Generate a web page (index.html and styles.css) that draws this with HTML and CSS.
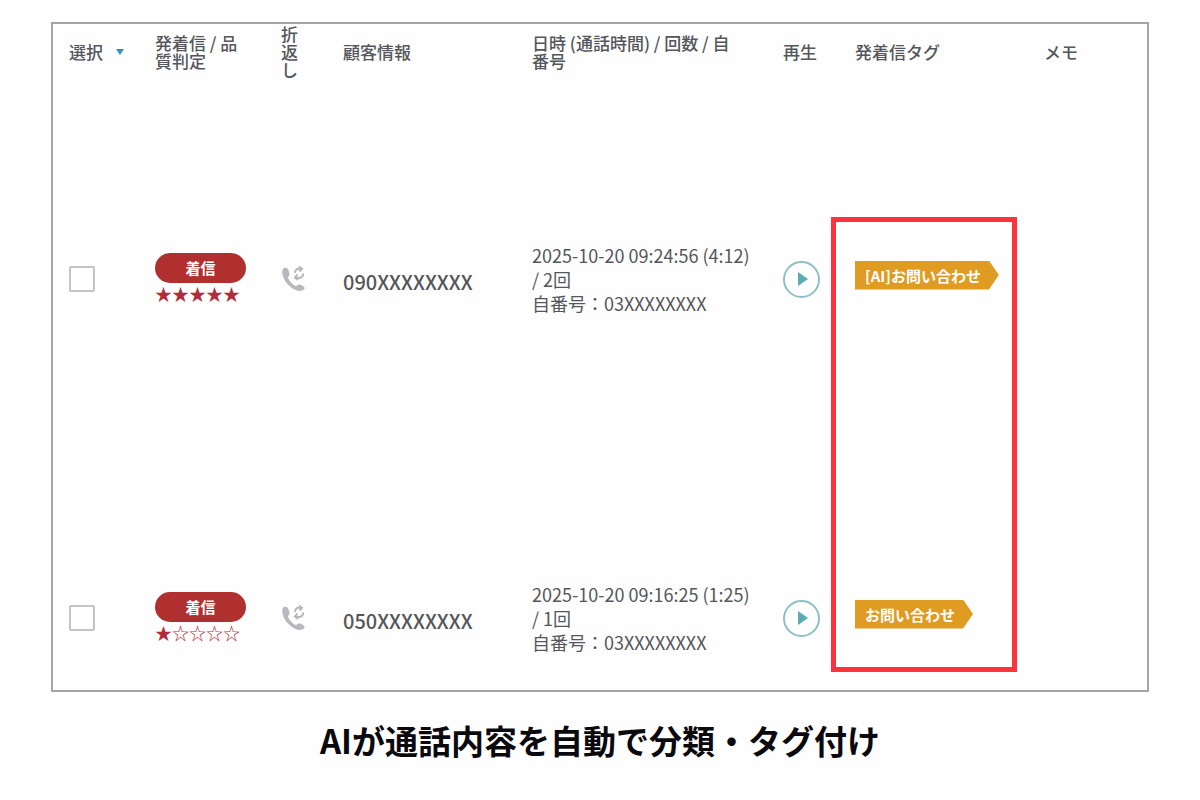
FILE: index.html
```html
<!DOCTYPE html>
<html lang="ja">
<head>
    <meta charset="UTF-8">
    <meta name="viewport" content="width=device-width, initial-scale=1.0">
    <title>通話履歴</title>
    <link rel="stylesheet" href="styles.css">
</head>
<body>
    <main class="page">
        <div class="call-frame">
            <table class="call-table">
                <thead>
                    <tr>
                        <th class="col-select"><button type="button" class="sort-button">選択<svg class="sort-arrow" viewBox="0 0 10 6" aria-hidden="true"><path d="M1 0h8L5 6z"/></svg></button></th>
                        <th class="col-type">発着信 / 品質判定</th>
                        <th class="col-callback">折返し</th>
                        <th class="col-customer">顧客情報</th>
                        <th class="col-date">日時 (通話時間) / 回数 / 自番号</th>
                        <th class="col-play">再生</th>
                        <th class="col-tag">発着信タグ</th>
                        <th class="col-memo">メモ</th>
                    </tr>
                </thead>
                <tbody>
                    <tr>
                        <td><input type="checkbox" class="row-check" aria-label="選択"></td>
                        <td>
                            <span class="call-type">着信</span>
                            <span class="stars">★★★★★</span>
                        </td>
                        <td>
                            <button type="button" class="callback-button" aria-label="折返し">
                                <svg viewBox="0 0 24 26" width="24" height="26" aria-hidden="true">
                                    <path class="handset" d="M2 3C0 6 2 13 7 18.500C11 23 17 26 21 24.500C23 24 24 22.500 23.500 21.500C23 20 20 18.500 18 18.500C16.500 18.500 16 20.500 14.500 20C12 19 8 14.500 7 12C6.500 10.500 8.500 10 8.500 8.500C8.500 6 7 2.500 5.500 2C4 1.500 2.800 2 2 3Z"/>
                                    <path class="arrows" d="M14 7C14 4 16 2.500 18 2.800H21M18 0.500L21 2.800L18.500 5.500M22 7.500C22.500 10.500 20 12.500 17 12H14.500M16.500 8.500L14 11.500L17 14"/>
                                </svg>
                            </button>
                        </td>
                        <td><span class="phone-number">090XXXXXXXX</span></td>
                        <td>2025-10-20 09:24:56 (4:12) / 2回<br>自番号：03XXXXXXXX</td>
                        <td>
                            <button type="button" class="play-button" aria-label="再生">
                                <svg viewBox="0 0 10 14" width="10" height="14" aria-hidden="true"><path d="M0 0L10 7L0 14z"/></svg>
                            </button>
                        </td>
                        <td class="tag-cell">
                            <span class="call-tag">[AI]お問い合わせ</span>
                            <div class="tag-highlight"></div>
                        </td>
                        <td></td>
                    </tr>
                    <tr>
                        <td><input type="checkbox" class="row-check" aria-label="選択"></td>
                        <td>
                            <span class="call-type">着信</span>
                            <span class="stars">★☆☆☆☆</span>
                        </td>
                        <td>
                            <button type="button" class="callback-button" aria-label="折返し">
                                <svg viewBox="0 0 24 26" width="24" height="26" aria-hidden="true">
                                    <path class="handset" d="M2 3C0 6 2 13 7 18.500C11 23 17 26 21 24.500C23 24 24 22.500 23.500 21.500C23 20 20 18.500 18 18.500C16.500 18.500 16 20.500 14.500 20C12 19 8 14.500 7 12C6.500 10.500 8.500 10 8.500 8.500C8.500 6 7 2.500 5.500 2C4 1.500 2.800 2 2 3Z"/>
                                    <path class="arrows" d="M14 7C14 4 16 2.500 18 2.800H21M18 0.500L21 2.800L18.500 5.500M22 7.500C22.500 10.500 20 12.500 17 12H14.500M16.500 8.500L14 11.500L17 14"/>
                                </svg>
                            </button>
                        </td>
                        <td><span class="phone-number">050XXXXXXXX</span></td>
                        <td>2025-10-20 09:16:25 (1:25) / 1回<br>自番号：03XXXXXXXX</td>
                        <td>
                            <button type="button" class="play-button" aria-label="再生">
                                <svg viewBox="0 0 10 14" width="10" height="14" aria-hidden="true"><path d="M0 0L10 7L0 14z"/></svg>
                            </button>
                        </td>
                        <td class="tag-cell"><span class="call-tag">お問い合わせ</span></td>
                        <td></td>
                    </tr>
                </tbody>
            </table>
        </div>
        <h1 class="page-caption">AIが通話内容を自動で分類・タグ付け</h1>
    </main>
</body>
</html>
```
FILE: styles.css
```css
* {
    box-sizing: border-box;
}

body {
    margin: 0;
    background-color: #fefefe;
    color: #55565b;
    font-family: "Noto Sans CJK JP", sans-serif;
}

button {
    font: inherit;
    color: inherit;
    background: none;
    border: none;
    padding: 0;
    cursor: pointer;
}

.page {
    padding: 22px 51px;
}

.call-frame {
    border: 2px solid #a5a3a9;
}

.call-table {
    width: 100%;
    table-layout: fixed;
    border-collapse: collapse;
}

.call-table th {
    height: 58px;
    padding: 0 14px 2px 16px;
    font-size: 17px;
    font-weight: 500;
    line-height: 18px;
    text-align: left;
    vertical-align: middle;
}

.call-table td {
    padding: 161px 14px 106px 16px;
    font-size: 18px;
    line-height: 24px;
    vertical-align: middle;
}

.call-table tbody tr:last-child td {
    padding-bottom: 36px;
}

.call-table .col-select {
    width: 86px;
    padding-right: 0;
}

.col-type {
    width: 126px;
}

.col-callback {
    width: 62px;
}

.col-customer {
    width: 189px;
}

.call-table .col-date {
    width: 251px;
    padding-right: 24px;
}

.col-play {
    width: 72px;
}

.col-tag {
    width: 189px;
}

.col-memo {
    width: 119px;
}

.sort-button {
    display: flex;
    align-items: center;
    gap: 12px;
}

.sort-arrow {
    width: 10px;
    height: 6px;
    fill: #2f8fc6;
}

.row-check {
    appearance: none;
    display: block;
    width: 26px;
    height: 26px;
    margin: 0;
    border: 2px solid #c3c2c8;
    border-radius: 2px;
    background-color: #fff;
}

.row-check:checked {
    background-color: #5aacb4;
}

.call-type {
    display: block;
    width: 91px;
    border-radius: 15px;
    background-color: #b03030;
    color: #fff;
    font-size: 15px;
    font-weight: 700;
    line-height: 30px;
    text-align: center;
}

.stars {
    display: block;
    color: #b42c3c;
    font-size: 17px;
    line-height: 22px;
}

.callback-button {
    display: block;
}

.callback-button svg {
    display: block;
}

.handset {
    fill: #b9b8be;
}

.arrows {
    fill: none;
    stroke: #b9b8be;
    stroke-width: 2;
}

.phone-number {
    display: block;
    padding-top: 6px;
    font-size: 20px;
    font-weight: 500;
}

.play-button {
    display: flex;
    align-items: center;
    justify-content: center;
    width: 37px;
    height: 37px;
    padding-left: 2px;
    border: 2px solid #8fc0c6;
    border-radius: 50%;
}

.play-button svg {
    fill: #5aacb0;
}

.tag-cell {
    position: relative;
}

.call-tag {
    display: inline-block;
    margin-bottom: 8px;
    padding: 0 18px 0 10px;
    background-color: #df9b22;
    clip-path: polygon(0 0, calc(100% - 10px) 0, 100% 50%, calc(100% - 10px) 100%, 0 100%);
    color: #fff;
    font-size: 15px;
    font-weight: 700;
    line-height: 29px;
}

/* frame around the tag column, spans both rows */
.tag-highlight {
    position: absolute;
    top: 135px;
    left: -8px;
    right: 11px;
    height: 455px;
    border: 5px solid #fc333c;
    pointer-events: none;
}

.page-caption {
    margin: 24px 0 0;
    color: #0a090d;
    font-size: 33px;
    font-weight: 700;
    line-height: 48px;
    text-align: center;
}
```
